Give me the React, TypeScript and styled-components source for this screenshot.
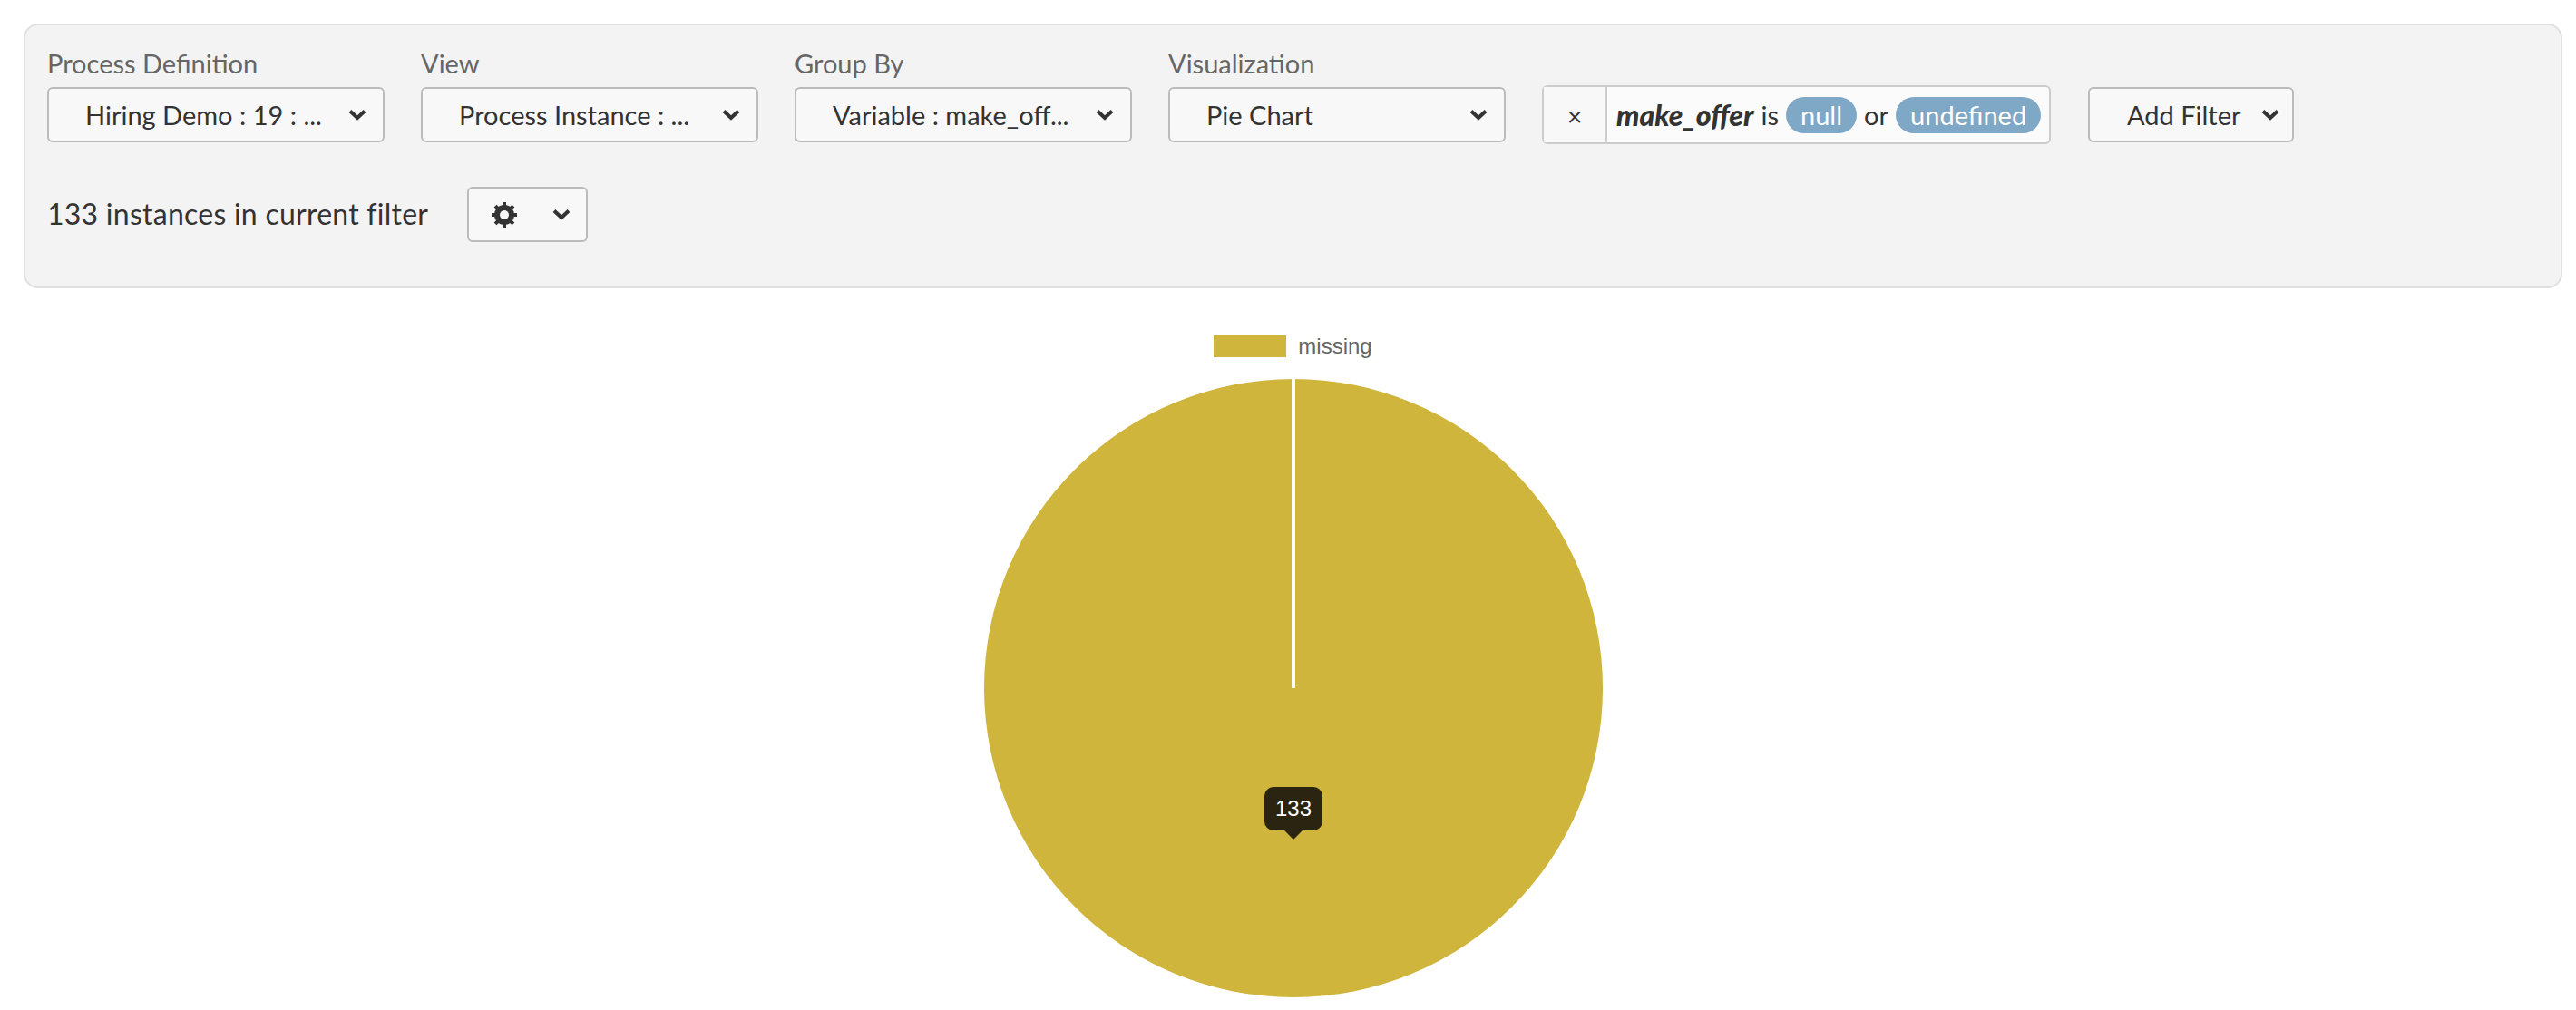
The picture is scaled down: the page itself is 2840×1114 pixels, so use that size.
import React from 'react';
import styled, { createGlobalStyle } from 'styled-components';

const GlobalStyle = createGlobalStyle`
    html, body {
        margin: 0;
        padding: 0;
        background: #fff;
        font-family: Lato, "Open Sans", sans-serif;
        color: #333;
    }
`;

const Page = styled.div`
    width: 2840px;
    height: 1114px;
    overflow: hidden;
    padding: 26px 15px 0 26px;
    box-sizing: border-box;
`;

const Controls = styled.div`
    box-sizing: border-box;
    height: 292px;
    padding: 24px 24px 0;
    background: #f3f3f3;
    border: 2px solid #e0e0e0;
    border-radius: 16px;
`;

const TopRow = styled.div`
    display: flex;
    align-items: flex-end;
`;

const Field = styled.div`
    display: flex;
    flex-direction: column;
    width: 372px;
    margin-right: 40px;
`;

const Label = styled.label`
    font-size: 29px;
    line-height: 36px;
    color: #666;
    margin-bottom: 8px;
`;

const Button = styled.div<{ $width: number }>`
    box-sizing: border-box;
    display: flex;
    align-items: center;
    justify-content: space-between;
    width: ${({ $width }) => $width}px;
    height: 61px;
    padding: 0 18px 0 40px;
    background: #f8f8f8;
    border: 2px solid #bbb;
    border-radius: 6px;
    font-size: 29px;
    color: #333;
    white-space: nowrap;
`;

const AddFilter = styled(Button)`
    margin-left: 41px;
    padding-left: 41px;
    padding-right: 14px;
`;

const Filter = styled.div`
    box-sizing: border-box;
    display: flex;
    align-items: stretch;
    width: 561px;
    height: 65px;
    margin-bottom: -2px;
    background: #fbfbfb;
    border: 2px solid #ccc;
    border-radius: 6px;
    font-size: 29px;
    color: #333;
    white-space: nowrap;
`;

const RemoveFilter = styled.div`
    display: flex;
    align-items: center;
    justify-content: center;
    width: 68px;
    flex: none;
    background: #f8f8f8;
    border-right: 2px solid #ccc;
    font-size: 28px;
    padding-top: 3px;
`;

const FilterText = styled.div`
    display: flex;
    align-items: center;
    gap: 8px;
    padding-left: 10px;
`;

const VariableName = styled.b`
    font-size: 32px;
    font-style: italic;
    font-weight: 900;
`;

const Pill = styled.span`
    display: inline-flex;
    align-items: center;
    height: 40px;
    padding: 0 16px;
    border-radius: 20px;
    background: #7fa7c6;
    color: #fff;
`;

const BottomRow = styled.div`
    display: flex;
    align-items: center;
    margin-top: 49px;
`;

const InstanceCount = styled.span`
    font-size: 32px;
    letter-spacing: 0.25px;
    color: #333;
    width: 463px;
    padding-bottom: 2px;
`;

const GearButton = styled(Button)`
    padding: 0 17px 0 25px;
`;

const ChartArea = styled.div`
    position: relative;
    display: flex;
    flex-direction: column;
    align-items: center;
    margin-top: 52px;
`;

const Legend = styled.div`
    display: flex;
    align-items: center;
    gap: 13px;
    height: 24px;
    font-family: "Liberation Sans", Arial, sans-serif;
    font-size: 24px;
    color: #666;
`;

const Swatch = styled.span`
    display: block;
    width: 80px;
    height: 24px;
    background: #cfb53b;
`;

const Pie = styled.svg`
    display: block;
    margin-top: 23px;
`;

const Tooltip = styled.div`
    position: absolute;
    left: 1368px;
    top: 498px;
    box-sizing: border-box;
    width: 64px;
    height: 48px;
    display: flex;
    align-items: center;
    justify-content: center;
    background: #2b2410;
    border-radius: 10px;
    color: #fff;
    font-family: "Liberation Sans", Arial, sans-serif;
    font-size: 24px;

    &::after {
        content: '';
        position: absolute;
        left: 50%;
        bottom: -10px;
        margin-left: -10px;
        border-left: 10px solid transparent;
        border-right: 10px solid transparent;
        border-top: 10px solid #2b2410;
    }
`;

const Chevron = () => (
    <svg width="20" height="13" viewBox="0 0 20 13">
        <path d="M2 2.5 L10 10 L18 2.5" fill="none" stroke="#333" strokeWidth="4" />
    </svg>
);

const GEAR_TEETH = [0, 45, 90, 135];

const Gear = () => (
    <svg width="28" height="28" viewBox="0 0 28 28">
        {GEAR_TEETH.map((angle) => (
            <rect key={angle} x="12" y="0" width="4" height="28" fill="#333" transform={`rotate(${angle} 14 14)`} />
        ))}
        <circle cx="14" cy="14" r="8" fill="none" stroke="#333" strokeWidth="6" />
        <circle cx="14" cy="14" r="5" fill="#f8f8f8" />
    </svg>
);

const FIELDS = [
    { label: 'Process Definition', value: 'Hiring Demo : 19 : ...' },
    { label: 'View', value: 'Process Instance : ...' },
    { label: 'Group By', value: 'Variable : make_off...' },
    { label: 'Visualization', value: 'Pie Chart' },
];

const App: React.FC = () => {
    return (
        <Page>
            <GlobalStyle />
            <Controls>
                <TopRow>
                    {FIELDS.map((field) => (
                        <Field key={field.label}>
                            <Label>{field.label}</Label>
                            <Button $width={372}>
                                {field.value}
                                <Chevron />
                            </Button>
                        </Field>
                    ))}
                    <Filter>
                        <RemoveFilter>×</RemoveFilter>
                        <FilterText>
                            <VariableName>make_offer</VariableName>
                            is
                            <Pill>null</Pill>
                            or
                            <Pill>undefined</Pill>
                        </FilterText>
                    </Filter>
                    <AddFilter $width={227}>
                        Add Filter
                        <Chevron />
                    </AddFilter>
                </TopRow>
                <BottomRow>
                    <InstanceCount>133 instances in current filter</InstanceCount>
                    <GearButton $width={133}>
                        <Gear />
                        <Chevron />
                    </GearButton>
                </BottomRow>
            </Controls>
            <ChartArea>
                <Legend>
                    <Swatch />
                    missing
                </Legend>
                <Pie width="684" height="684" viewBox="0 0 684 684">
                    <circle cx="342" cy="342" r="341" fill="#cfb53b" />
                    <line x1="342" y1="0" x2="342" y2="342" stroke="#fff" strokeWidth="4" />
                </Pie>
                <Tooltip>133</Tooltip>
            </ChartArea>
        </Page>
    );
};

export default App;
